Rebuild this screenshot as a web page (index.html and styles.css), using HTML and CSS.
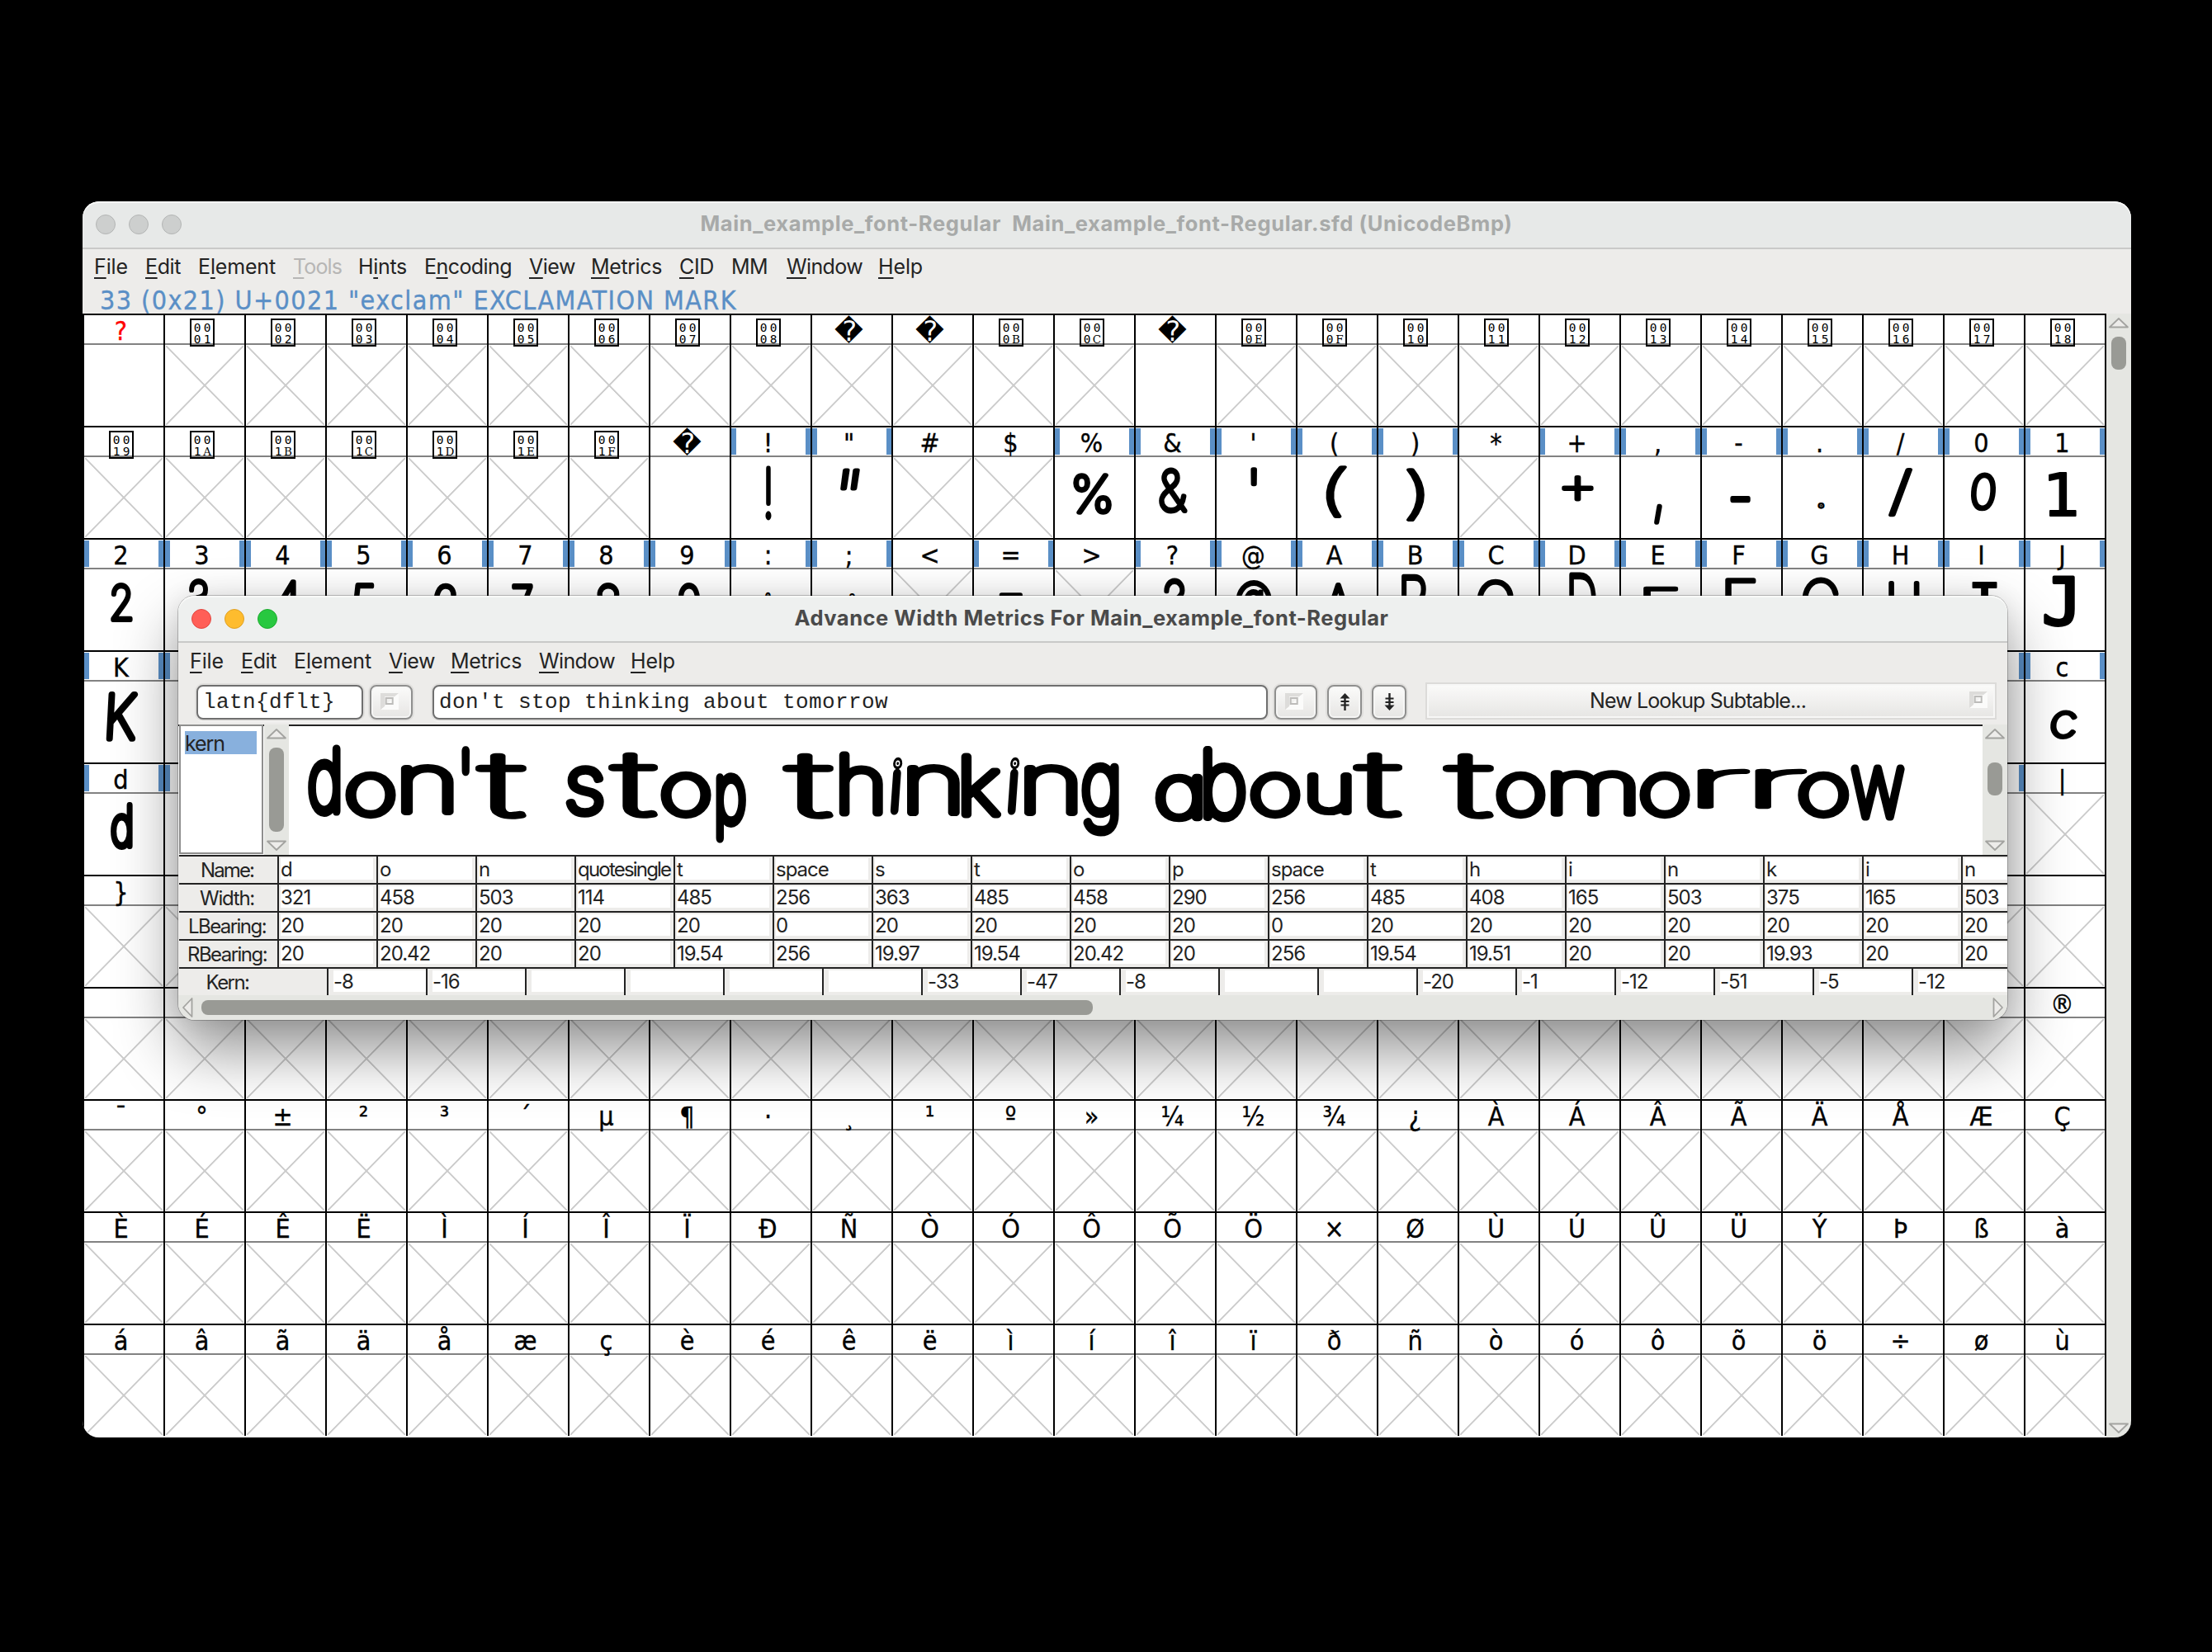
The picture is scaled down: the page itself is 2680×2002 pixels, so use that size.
FILE: index.html
```html
<!DOCTYPE html>
<html lang="en">
<head>
<meta charset="utf-8">
<title>Main_example_font-Regular</title>
<link rel="stylesheet" href="styles.css">
</head>
<body>
<div class="desktop">
  <section class="window font-window">
    <header class="titlebar inactive">
      <div class="lights"><i></i><i></i><i></i></div>
      <div class="title"><span data-w="984">Main_example_font-Regular&nbsp; Main_example_font-Regular.sfd (UnicodeBmp)</span></div>
    </header>
    <nav class="menubar" id="font-menu"></nav>
    <div class="info"><span data-w="772">33 (0x21) U+0021 "exclam" EXCLAMATION MARK</span></div>
    <div class="font-body">
      <div class="glyph-grid" id="grid"></div>
      <div class="scroll-v">
        <svg class="arrow" viewBox="0 0 26 14"><path d="M2 12.5 13 2 24 12.5Z"/></svg>
        <div class="thumb"></div>
        <svg class="arrow last" viewBox="0 0 26 14"><path d="M2 1.5H24L13 12Z"/></svg>
      </div>
    </div>
  </section>

  <section class="window metrics-window">
    <header class="titlebar">
      <div class="lights"><i class="red"></i><i class="amber"></i><i class="green"></i></div>
      <div class="title"><span data-w="720">Advance Width Metrics For Main_example_font-Regular</span></div>
    </header>
    <nav class="menubar" id="metrics-menu"></nav>
    <div class="toolbar">
      <div class="field script">latn{dflt}</div>
      <div class="button drop"><svg viewBox="0 0 24 22"><path class="hi" d="M22 0V20H0Z"/><path class="lo" d="M0 0H22L17 4H5V16L0 20Z"/><rect x="6.700" y="6" width="8" height="7"/></svg></div>
      <div class="field sample">don't stop thinking about tomorrow</div>
      <div class="button drop"><svg viewBox="0 0 24 22"><path class="hi" d="M22 0V20H0Z"/><path class="lo" d="M0 0H22L17 4H5V16L0 20Z"/><rect x="6.700" y="6" width="8" height="7"/></svg></div>
      <div class="button step up"><svg viewBox="0 0 12 22"><path d="M6 0 12 6.500H7.200V9H11V11H7.200V13.500H11V15.500H7.200V21H4.800V15.500H1V13.500H4.800V11H1V9H4.800V6.500H0Z"/></svg></div>
      <div class="button step down"><svg viewBox="0 0 12 22"><path d="M6 21 12 14.500H7.200V12H11V10H7.200V7.500H11V5.500H7.200V0H4.800V5.500H1V7.500H4.800V10H1V12H4.800V14.500H0Z"/></svg></div>
      <div class="lookup"><span data-w="262">New Lookup Subtable...</span><svg viewBox="0 0 24 22"><path class="hi" d="M22 0V20H0Z"/><path class="lo" d="M0 0H22L17 4H5V16L0 20Z"/><rect x="6.700" y="6" width="8" height="7"/></svg></div>
    </div>
    <div class="preview-row">
      <div class="features"><div class="feature"><span data-w="48">kern</span></div></div>
      <div class="scroll-v features-scroll">
        <svg class="arrow" viewBox="0 0 26 14"><path d="M2 12.500 13 2 24 12.500Z"/></svg>
        <div class="thumb"></div>
        <svg class="arrow last" viewBox="0 0 26 14"><path d="M2 1.500H24L13 12Z"/></svg>
      </div>
      <svg class="ink preview" id="preview" viewBox="350 880 2052 156"></svg>
      <div class="scroll-v preview-scroll">
        <svg class="arrow" viewBox="0 0 26 14"><path d="M2 12.500 13 2 24 12.500Z"/></svg>
        <div class="thumb"></div>
        <svg class="arrow last" viewBox="0 0 26 14"><path d="M2 1.500H24L13 12Z"/></svg>
      </div>
    </div>
    <div class="table" id="table"></div>
    <div class="scroll-h">
      <svg viewBox="0 0 14 26"><path d="M12.500 2V24L2 13Z"/></svg>
      <div class="thumb"></div>
      <svg class="last" viewBox="0 0 14 26"><path d="M1.500 2V24L12 13Z"/></svg>
    </div>
  </section>
</div>
<script src="app.js"></script>
</body>
</html>
```
FILE: styles.css
```css
* { box-sizing: border-box; }
body { margin: 0; background: #000; font-family: Inter, "Liberation Sans", sans-serif; color: #232323; }
.desktop { position: relative; width: 2680px; height: 2002px; overflow: hidden; }
.window { position: absolute; display: flex; flex-direction: column; background: #edecea; }
.font-window { left: 100px; top: 244px; width: 2482px; height: 1498px; border-radius: 20px; overflow: hidden; }
.metrics-window {
  left: 216px; top: 722px; width: 2216px; height: 514px; border-radius: 20px;
  box-shadow: 0 0 0 1px rgba(0,0,0,.22), 0 36px 76px rgba(0,0,0,.44), 0 0 30px rgba(0,0,0,.08);
}

.titlebar { position: relative; height: 57px; flex: none; background: #eef0ef; border-bottom: 2px solid #c9c9c8; border-radius: 20px 20px 0 0; box-shadow: inset 0 2px 0 #f8f9f8; }
.titlebar.inactive { height: 58px; background: #e7e9e8; }
.lights { position: absolute; left: 16px; top: 16px; display: flex; gap: 16px; }
.lights i { width: 24px; height: 24px; border-radius: 50%; background: #cdcfce; border: 1px solid #b3b5b4; }
.lights .red { background: #ff5f57; border-color: #e2463f; }
.lights .amber { background: #febc2e; border-color: #dfa023; }
.lights .green { background: #28c840; border-color: #1dab2f; }
.title { text-align: center; font-size: 25.5px; font-weight: 700; line-height: 54px; color: #4a4a4a; white-space: pre; padding-right: 3px; }
.inactive .title { color: #a8aaa9; line-height: 53px; padding-right: 1px; }

.menubar { display: flex; flex: none; height: 44px; padding-left: 14px; font-size: 25px; line-height: 42px; white-space: nowrap; }
.metrics-window .menubar { height: 47px; line-height: 44px; }
.menubar u { text-decoration: underline 2px; text-underline-offset: 4px; text-decoration-skip-ink: none; }
.menubar .off { color: #b7b6b5; }

.info { flex: none; height: 34px; padding-left: 21px; font: 32px/37px "DejaVu Sans Condensed", "DejaVu Sans", sans-serif; font-stretch: condensed; color: #5a8fc6; -webkit-text-stroke: .35px #5a8fc6; white-space: pre; }

.font-body { display: flex; height: 1362px; background: #000; }
.glyph-grid { display: grid; grid-template-columns: repeat(25, 98px); grid-auto-rows: 136px; margin-left: 2px; background: #fff; }
.cell { border-top: 2px solid #000; border-right: 2px solid #000; }
.code { display: flex; justify-content: center; height: 36px; padding-right: 7px; border-bottom: 2px solid #828282; font: 32px/38px "DejaVu Sans Condensed", "DejaVu Sans", sans-serif; font-stretch: condensed; color: #000; -webkit-text-stroke: .35px; }
.marked .code { background:
  linear-gradient(#5a8fc6,#5a8fc6) 0 1px / 6px 32px no-repeat,
  linear-gradient(#5a8fc6,#5a8fc6) 100% 1px / 6px 32px no-repeat; }
.code.none { color: #f00; }
.code.lost { font-family: "DejaVu Sans", sans-serif; font-stretch: normal; font-size: 34px; line-height: 39px; -webkit-text-stroke: 0; }
.hexbox { display: grid; grid-template-columns: 12px 12px; grid-template-rows: 14px 14px; justify-content: center; width: 30px; height: 34px; margin: 4px -1px 0 0; padding-top: 2px; border: 2px solid #000; font: 14.5px/14px "DejaVu Sans Mono", monospace; font-stretch: normal; text-align: center; -webkit-text-stroke: 0; }
.hexbox b { font: 13.5px/14px "DejaVu Serif", serif; }
.blank .slot { height: 98px; background:
  linear-gradient(to top right, transparent calc(50% - 1.3px), #ccc calc(50% - .6px), #ccc calc(50% + .6px), transparent calc(50% + 1.3px)) 1px 1px / 94px 96px no-repeat,
  linear-gradient(to bottom right, transparent calc(50% - 1.3px), #ccc calc(50% - .6px), #ccc calc(50% + .6px), transparent calc(50% + 1.3px)) 1px 1px / 94px 96px no-repeat; }
.ink { display: block; overflow: visible; font-family: Inter, sans-serif; font-weight: 100; font-feature-settings: "cv11" 1; }
.ink text { fill: #000; stroke: #000; stroke-linejoin: round; stroke-linecap: round; }
.ink .slab { font-family: "DejaVu Sans Mono", monospace; font-weight: 400; }
.slot .ink { width: 96px; height: 98px; }

.scroll-v { display: flex; flex-direction: column; align-items: center; width: 30px; flex: none; background: #e5e6e2; padding: 4px 0; }
.scroll-v .arrow, .scroll-h svg { width: 26px; height: 14px; fill: #edecea; stroke: #a3a3a0; stroke-width: 1.8; stroke-linejoin: round; flex: none; }
.scroll-v .thumb { width: 18px; height: 40px; margin-top: 10px; border-radius: 8px; background: #999a95; flex: none; }
.scroll-v .last { margin-top: auto; }

.toolbar { display: flex; flex: none; height: 52px; padding: 4px 0 6px 22px; }
.field { height: 42px; border: 2px solid #6f6f6f; border-radius: 8px; background: #fff; box-shadow: 0 0 0 2px #e0dfdd, 0 3px 1px #f8f8f7; padding-left: 6px; font: 26px/38px "Liberation Mono", monospace; letter-spacing: .4px; white-space: pre; color: #232323; }
.script { width: 202px; }
.sample { width: 1012px; margin-left: 24px; }
.button { display: flex; align-items: center; justify-content: center; height: 42px; border: 2px solid #8f8f8e; border-radius: 8px; background: linear-gradient(#fbfbfa, #e6e5e3); box-shadow: 0 0 0 2px #e0dfdd, inset 0 0 0 2px #f6f6f5; margin-left: 8px; }
.drop { width: 52px; }
.drop svg, .lookup svg { width: 24px; height: 22px; }
.drop svg { margin-right: 2px; }
.hi { fill: #fbfbfa; }
.lo { fill: #dddcda; }
.toolbar rect { fill: none; stroke: #bdbcba; stroke-width: 2; }
.step { width: 42px; margin-left: 12px; }
.step svg { width: 13px; height: 22px; fill: #232323; }
.lookup { display: flex; align-items: center; width: 692px; height: 45px; margin: -3px 0 0 23px; padding: 0 7px 2px 197px; border: 2px solid #dcdbd9; background: linear-gradient(#fbfbfa, #e6e5e3); box-shadow: inset 0 0 0 2px #f7f7f6; font-size: 25px; white-space: pre; }
.lookup svg { margin-left: auto; }

.preview-row { display: flex; flex: none; height: 158px; background: linear-gradient(#232323 0 2px, #fff 2px); padding-left: 1px; }
.features { width: 102px; height: 157px; border: 2px solid #8f8f8e; background: #fff; padding: 6px 6px 6px 5px; }
.feature { height: 28px; background: #88b0dd; font-size: 25px; line-height: 30px; }
.features-scroll { margin-left: 1px; }
.features-scroll .thumb { height: 102px; }
.preview { width: 2052px; height: 156px; margin-top: 2px; flex: none; }
.preview-scroll .thumb { margin-top: 28px; }

.table { flex: none; height: 170px; padding-left: 1px; overflow: hidden; font-size: 24px; }
.row { display: flex; height: 34px; border-top: 2px solid #232323; }
.head { width: 119px; flex: none; padding-right: 3px; text-align: center; line-height: 33px; }
.row .val { width: 120px; flex: none; border-left: 2px solid #232323; padding: 2px 4px 4px 2px; }
.val span { display: block; height: 26px; line-height: 28px; background: #fff; letter-spacing: -1px; white-space: pre; }
.val.long span { letter-spacing: -1.8px; }
.kern .head { width: 179px; padding-right: 62px; }
.kern .val { padding: 2px 0 4px 6px; }
.kern .val span { width: 112px; }
.scroll-h { display: flex; align-items: center; height: 30px; flex: none; background: #e5e6e2; border-radius: 0 0 20px 20px; padding: 0 4px; }
.scroll-h svg { width: 14px; height: 26px; }
.scroll-h .thumb { width: 1080px; height: 18px; margin-left: 10px; border-radius: 8px; background: #999a95; }
.scroll-h .last { margin-left: auto; }
```
FILE: app.js
```js
// Menus: label (underscore precedes the mnemonic), left edge, text width.
function buildMenu(id, items) {
  const nav = document.getElementById(id);
  items.forEach(([label, x, w], i) => {
    const next = items[i + 1] ? items[i + 1][1] : x + w + 20;
    const item = document.createElement('div');
    item.style.width = (next - x) + 'px';
    const html = label.replace(/_(.)/, '<u>$1</u>');
    item.innerHTML = '<span data-w="' + w + '"' + (label === '_Tools' ? ' class="off"' : '') + '>' + html + '</span>';
    nav.appendChild(item);
  });
}
buildMenu('font-menu', [['_File', 114, 41], ['_Edit', 176, 43], ['E_lement', 240, 94], ['_Tools', 355, 59],
  ['H_ints', 434, 59], ['E_ncoding', 514, 106], ['_View', 641, 56], ['_Metrics', 716, 86], ['_CID', 823, 42],
  ['MM', 886, 44], ['_Window', 953, 92], ['_Help', 1064, 54]]);
buildMenu('metrics-menu', [['_File', 114, 41], ['_Edit', 176, 43], ['E_lement', 240, 94], ['_View', 355, 56],
  ['_Metrics', 430, 86], ['_Window', 537, 92], ['_Help', 648, 54]]);

// Letter-space a run of text to a set width.
document.querySelectorAll('[data-w]').forEach(el => {
  const natural = el.getBoundingClientRect().width;
  el.style.letterSpacing = ((+el.dataset.w - natural) / el.textContent.length) + 'px';
});

const ctx = document.createElement('canvas').getContext('2d');
const NS = 'http://www.w3.org/2000/svg';
// Place one character so that its ink, pen width included, fills x0..x1, y0..y1.
function ink(svg, ch, [x0, x1, y0, y1, skew], pen) {
  const slab = 'I1J'.includes(ch);
  ctx.font = slab ? '400 100px "DejaVu Sans Mono"' : '100 100px Inter';
  if (slab) pen = ch === 'J' ? 4 : 2;
  const m = ctx.measureText(ch);
  const l = -m.actualBoundingBoxLeft, r = m.actualBoundingBoxRight;
  const t = -m.actualBoundingBoxAscent, b = m.actualBoundingBoxDescent;
  let p = pen, sx = 1, sy = 1;
  for (let i = 0; i < 12; i++) {
    sx = (x1 - x0) / (r - l + p);
    sy = (y1 - y0) / (b - t + p);
    p = pen / Math.sqrt(sx * sy);
  }
  const el = document.createElementNS(NS, 'text');
  el.textContent = ch;
  if (slab) el.setAttribute('class', 'slab');
  el.setAttribute('font-size', 100);
  el.setAttribute('stroke-width', p);
  const cx = (x0 + x1) / 2, cy = (y0 + y1) / 2;
  el.setAttribute('transform', `translate(${cx} ${cy}) skewX(${skew || 0}) scale(${sx} ${sy}) translate(${-(l + r) / 2} ${-(t + b) / 2})`);
  svg.appendChild(el);
}

const drawn = {
  '!': [927, 935, 564, 630], '"': [1019, 1041, 567, 594, -8], '%': [1300, 1347, 572, 624], '&': [1404, 1439, 567, 623],
  "'": [1515, 1523, 566, 589], '(': [1606, 1629, 564, 628, -6], ')': [1703, 1726, 567, 632], '+': [1892, 1931, 576, 608],
  ',': [2004, 2014, 611, 636], '-': [2096, 2121, 600, 609], '.': [2202, 2211, 609, 617], '/': [2288, 2318, 566, 626],
  '0': [2388, 2418, 572, 619, -4], '1': [2482, 2516, 572, 626], '2': [134, 161, 706, 754], '3': [228, 253, 701, 750],
  '4': [330, 365, 702, 756], '5': [427, 455, 706, 756], '6': [525, 554, 706, 756], '7': [620, 646, 707, 758],
  '8': [722, 752, 706, 760], '9': [822, 849, 706, 760], ':': [927, 934, 717, 750], ';': [1028, 1036, 719, 752],
  '=': [1210, 1239, 718, 740], '?': [1410, 1436, 700, 756], '@': [1497, 1541, 703, 755], 'A': [1602, 1641, 706, 760],
  'B': [1698, 1730, 696, 760], 'C': [1789, 1834, 702, 760], 'D': [1901, 1934, 693, 760], 'E': [1991, 2035, 711, 760],
  'F': [2090, 2128, 701, 760], 'G': [2183, 2228, 700, 760], 'H': [2288, 2326, 704, 760], 'I': [2389, 2420, 705, 760],
  'J': [2476, 2514, 697, 760], 'K': [130, 166, 838, 899, -3], 'c': [2484, 2516, 860, 896, -6], 'd': [134, 161, 972, 1030]
};
const grid = document.getElementById('grid');
for (let code = 0; code < 250; code++) {
  const ch = String.fromCharCode(code);
  const cell = document.createElement('div');
  const label = document.createElement('div');
  const slot = document.createElement('div');
  cell.className = 'cell';
  label.className = 'code';
  slot.className = 'slot';
  const marked = (code > 32 && code < 124) && !'#$*<>'.includes(ch);
  const lost = [9, 10, 13, 32].includes(code);
  if (marked) cell.classList.add('marked');
  else if (![0, 13, 32].includes(code)) cell.classList.add('blank');
  if (code === 0) { label.textContent = '?'; label.classList.add('none'); }
  else if (lost) { label.textContent = '\uFFFD'; label.classList.add('lost'); }
  else if (code < 32) {
    const hex = code.toString(16).toUpperCase().padStart(4, '0');
    label.innerHTML = '<div class="hexbox">' + [...hex].map(c => /\d/.test(c) ? `<span>${c}</span>` : `<b>${c}</b>`).join('') + '</div>';
  } else if (code < 127 || (code > 160 && code !== 173)) label.textContent = ch;
  if (drawn[ch] && marked) {
    const svg = document.createElementNS(NS, 'svg');
    const x = 102 + 98 * (code % 25), y = 418 + 136 * Math.floor(code / 25);
    svg.setAttribute('viewBox', `${x} ${y} 96 98`);
    svg.setAttribute('class', 'ink');
    ink(svg, ch, drawn[ch], 'Kd'.includes(ch) ? 7 : 5.5);
    slot.appendChild(svg);
  }
  cell.append(label, slot);
  grid.appendChild(cell);
}

const preview = document.getElementById('preview');
[['d', 373, 413, 902, 991], ['o', 418, 480, 934, 993], ['n', 485, 550, 926, 988], ["'", 559, 569, 904, 940], ['t', 575, 640, 912, 994],
 ['s', 685, 732, 927, 992], ['t', 736, 799, 912, 994], ['o', 800, 862, 934, 993], ['p', 867, 904, 936, 1022],
 ['t', 947, 1012, 912, 994], ['h', 1016, 1070, 910, 989], ['i', 1080, 1092, 917, 987, -4], ['n', 1098, 1163, 925, 989],
 ['k', 1164, 1214, 912, 991], ['i', 1222, 1234, 917, 987, -4], ['n', 1240, 1306, 925, 989], ['g', 1310, 1356, 923, 1014],
 ['a', 1398, 1451, 936, 997], ['b', 1457, 1510, 904, 997], ['o', 1514, 1576, 934, 993], ['u', 1583, 1638, 936, 989], ['t', 1638, 1701, 912, 994],
 ['t', 1747, 1812, 912, 994], ['o', 1812, 1873, 934, 993], ['m', 1878, 1982, 932, 990], ['o', 1986, 2048, 934, 993],
 ['r', 2055, 2121, 931, 980], ['r', 2125, 2190, 931, 980], ['o', 2178, 2241, 934, 993], ['w', 2242, 2308, 926, 994]
].forEach(([c, ...box]) => ink(preview, c, box, c === 'r' ? 8 : 9.5));

const rows = [
  ['Name:', 64, 'd o n quotesingle t space s t o p space t h i n k i n'],
  ['Width:', 66, '321 458 503 114 485 256 363 485 458 290 256 485 408 165 503 375 165 503'],
  ['LBearing:', 94, '20 20 20 20 20 0 20 20 20 20 0 20 20 20 20 20 20 20'],
  ['RBearing:', 96, '20 20.42 20 20 19.54 256 19.97 19.54 20.42 20 256 19.54 19.51 20 20 19.93 20 20'],
  ['Kern:', 52, '-8,-16,,,,,-33,-47,-8,,,-20,-1,-12,-51,-5,-12']
];
const table = document.getElementById('table');
rows.forEach(([head, w, values], i) => {
  const row = document.createElement('div');
  row.className = i === 4 ? 'row kern' : 'row';
  row.innerHTML = `<div class="head"><span>${head}</span></div>` +
    values.split(i === 4 ? ',' : ' ').map(v => `<div class="val${v.length > 8 ? ' long' : ''}"><span>${v}</span></div>`).join('');
  table.appendChild(row);
  const s = row.querySelector('.head span');
  s.style.letterSpacing = ((w - s.getBoundingClientRect().width) / head.length) + 'px';
});
```
